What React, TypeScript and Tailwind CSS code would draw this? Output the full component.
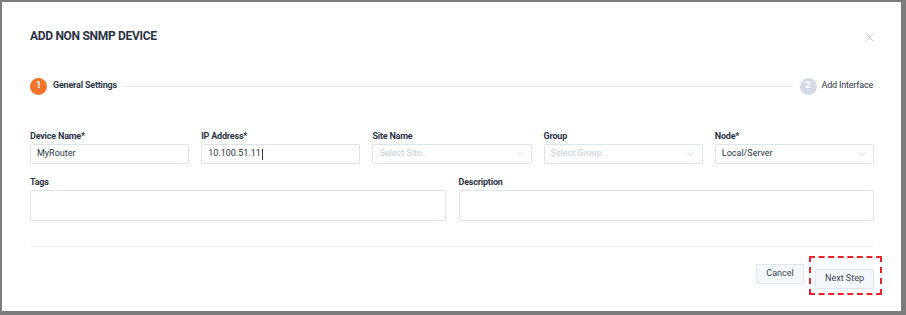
import { X, ChevronDown } from "lucide-react";

const font = { fontFamily: "Roboto, 'Liberation Sans', sans-serif" };

function Label({ text }: { text: string }) {
  return (
    <div className="mb-[1px] h-[14px] text-[9px] leading-[14px] font-bold tracking-[-0.2px] text-[#2c3344]">{text}</div>
  );
}

function TextInput({ value, cursor }: { value: string; cursor?: boolean }) {
  return (
    <div className="flex h-[20px] items-center rounded-[2px] border border-[#dfe3ea] px-[6px] text-[9px] text-[#2c3344]">
      {value}
      {cursor && <span className="ml-[1px] inline-block h-[11px] w-px bg-[#2c3344]" />}
    </div>
  );
}

function SelectInput({ value, placeholder }: { value?: string; placeholder?: string }) {
  return (
    <div className="flex h-[20px] items-center justify-between rounded-[2px] border border-[#dfe3ea] pl-[6px] pr-[5px] text-[9px]">
      {value ? (
        <span className="text-[#2c3344]">{value}</span>
      ) : (
        <span className="text-[#c9cdd5]">{placeholder}</span>
      )}
      <ChevronDown size={12} strokeWidth={1.5} className="text-[#c3c8d1]" />
    </div>
  );
}

export default function App() {
  return (
    <div className="h-[315px] w-[906px] bg-[#7c7c7c] pl-[2px] pt-[2px]" style={font}>
      <div className="h-[309px] w-[899px] bg-white pl-[28px] pr-[27px] pt-[26px]">
        <div className="flex h-[16px] items-center justify-between">
          <h2 className="text-[12px] leading-[16px] font-bold tracking-tight text-[#2c3344]">ADD NON SNMP DEVICE</h2>
          <X size={15} strokeWidth={1.5} className="mr-[-3px] mt-[2px] text-[#c2c8d2]" />
        </div>

        <div className="mt-[34px] flex h-[16px] items-center">
          <span className="flex h-[17px] w-[17px] items-center justify-center rounded-full bg-[#f2732a] text-[9px] font-bold text-white">
            1
          </span>
          <span className="ml-[6px] text-[9px] font-bold tracking-[-0.2px] text-[#2f3747]">General Settings</span>
          <div className="mx-[6px] h-px flex-1 bg-[#e9ecf0]" />
          <span className="flex h-[17px] w-[17px] items-center justify-center rounded-full bg-[#d4dae2] text-[9px] font-bold text-white">
            2
          </span>
          <span className="ml-[5px] mr-[1px] text-[9px] tracking-[-0.2px] text-[#2f3747]">Add Interface</span>
        </div>

        <div className="mt-[35px] grid grid-cols-5 gap-x-[12px]">
          <div>
            <Label text="Device Name*" />
            <TextInput value="MyRouter" />
          </div>
          <div>
            <Label text="IP Address*" />
            <TextInput value="10.100.51.11" cursor />
          </div>
          <div>
            <Label text="Site Name" />
            <SelectInput placeholder="Select Site.." />
          </div>
          <div>
            <Label text="Group" />
            <SelectInput placeholder="Select Group.." />
          </div>
          <div>
            <Label text="Node*" />
            <SelectInput value="Local/Server" />
          </div>
        </div>

        <div className="mt-[11px] grid grid-cols-2 gap-x-[13px]">
          <div>
            <Label text="Tags" />
            <div className="h-[31px] rounded-[2px] border border-[#dfe3ea]" />
          </div>
          <div>
            <Label text="Description" />
            <div className="h-[31px] rounded-[2px] border border-[#dfe3ea]" />
          </div>
        </div>

        <div className="mt-[25px] h-px bg-[#eceef2]" />

        <div className="mt-[17px] flex justify-end gap-[11px]">
          <button className="h-[20px] w-[48px] rounded-[2px] border border-[#e0e5ec] bg-[#f4f7fb] text-[9px] text-[#3d4451]">
            Cancel
          </button>
          <div className="relative">
            <button className="h-[20px] w-[59px] rounded-[2px] border border-[#e0e5ec] bg-[#f4f7fb] text-[9px] text-[#3d4451]">
              Next Step
            </button>
            <div className="pointer-events-none absolute -left-[6px] -right-[8px] -top-[8px] -bottom-[6px] border-2 border-dashed border-[#e8242b]" />
          </div>
        </div>
      </div>
    </div>
  );
}
